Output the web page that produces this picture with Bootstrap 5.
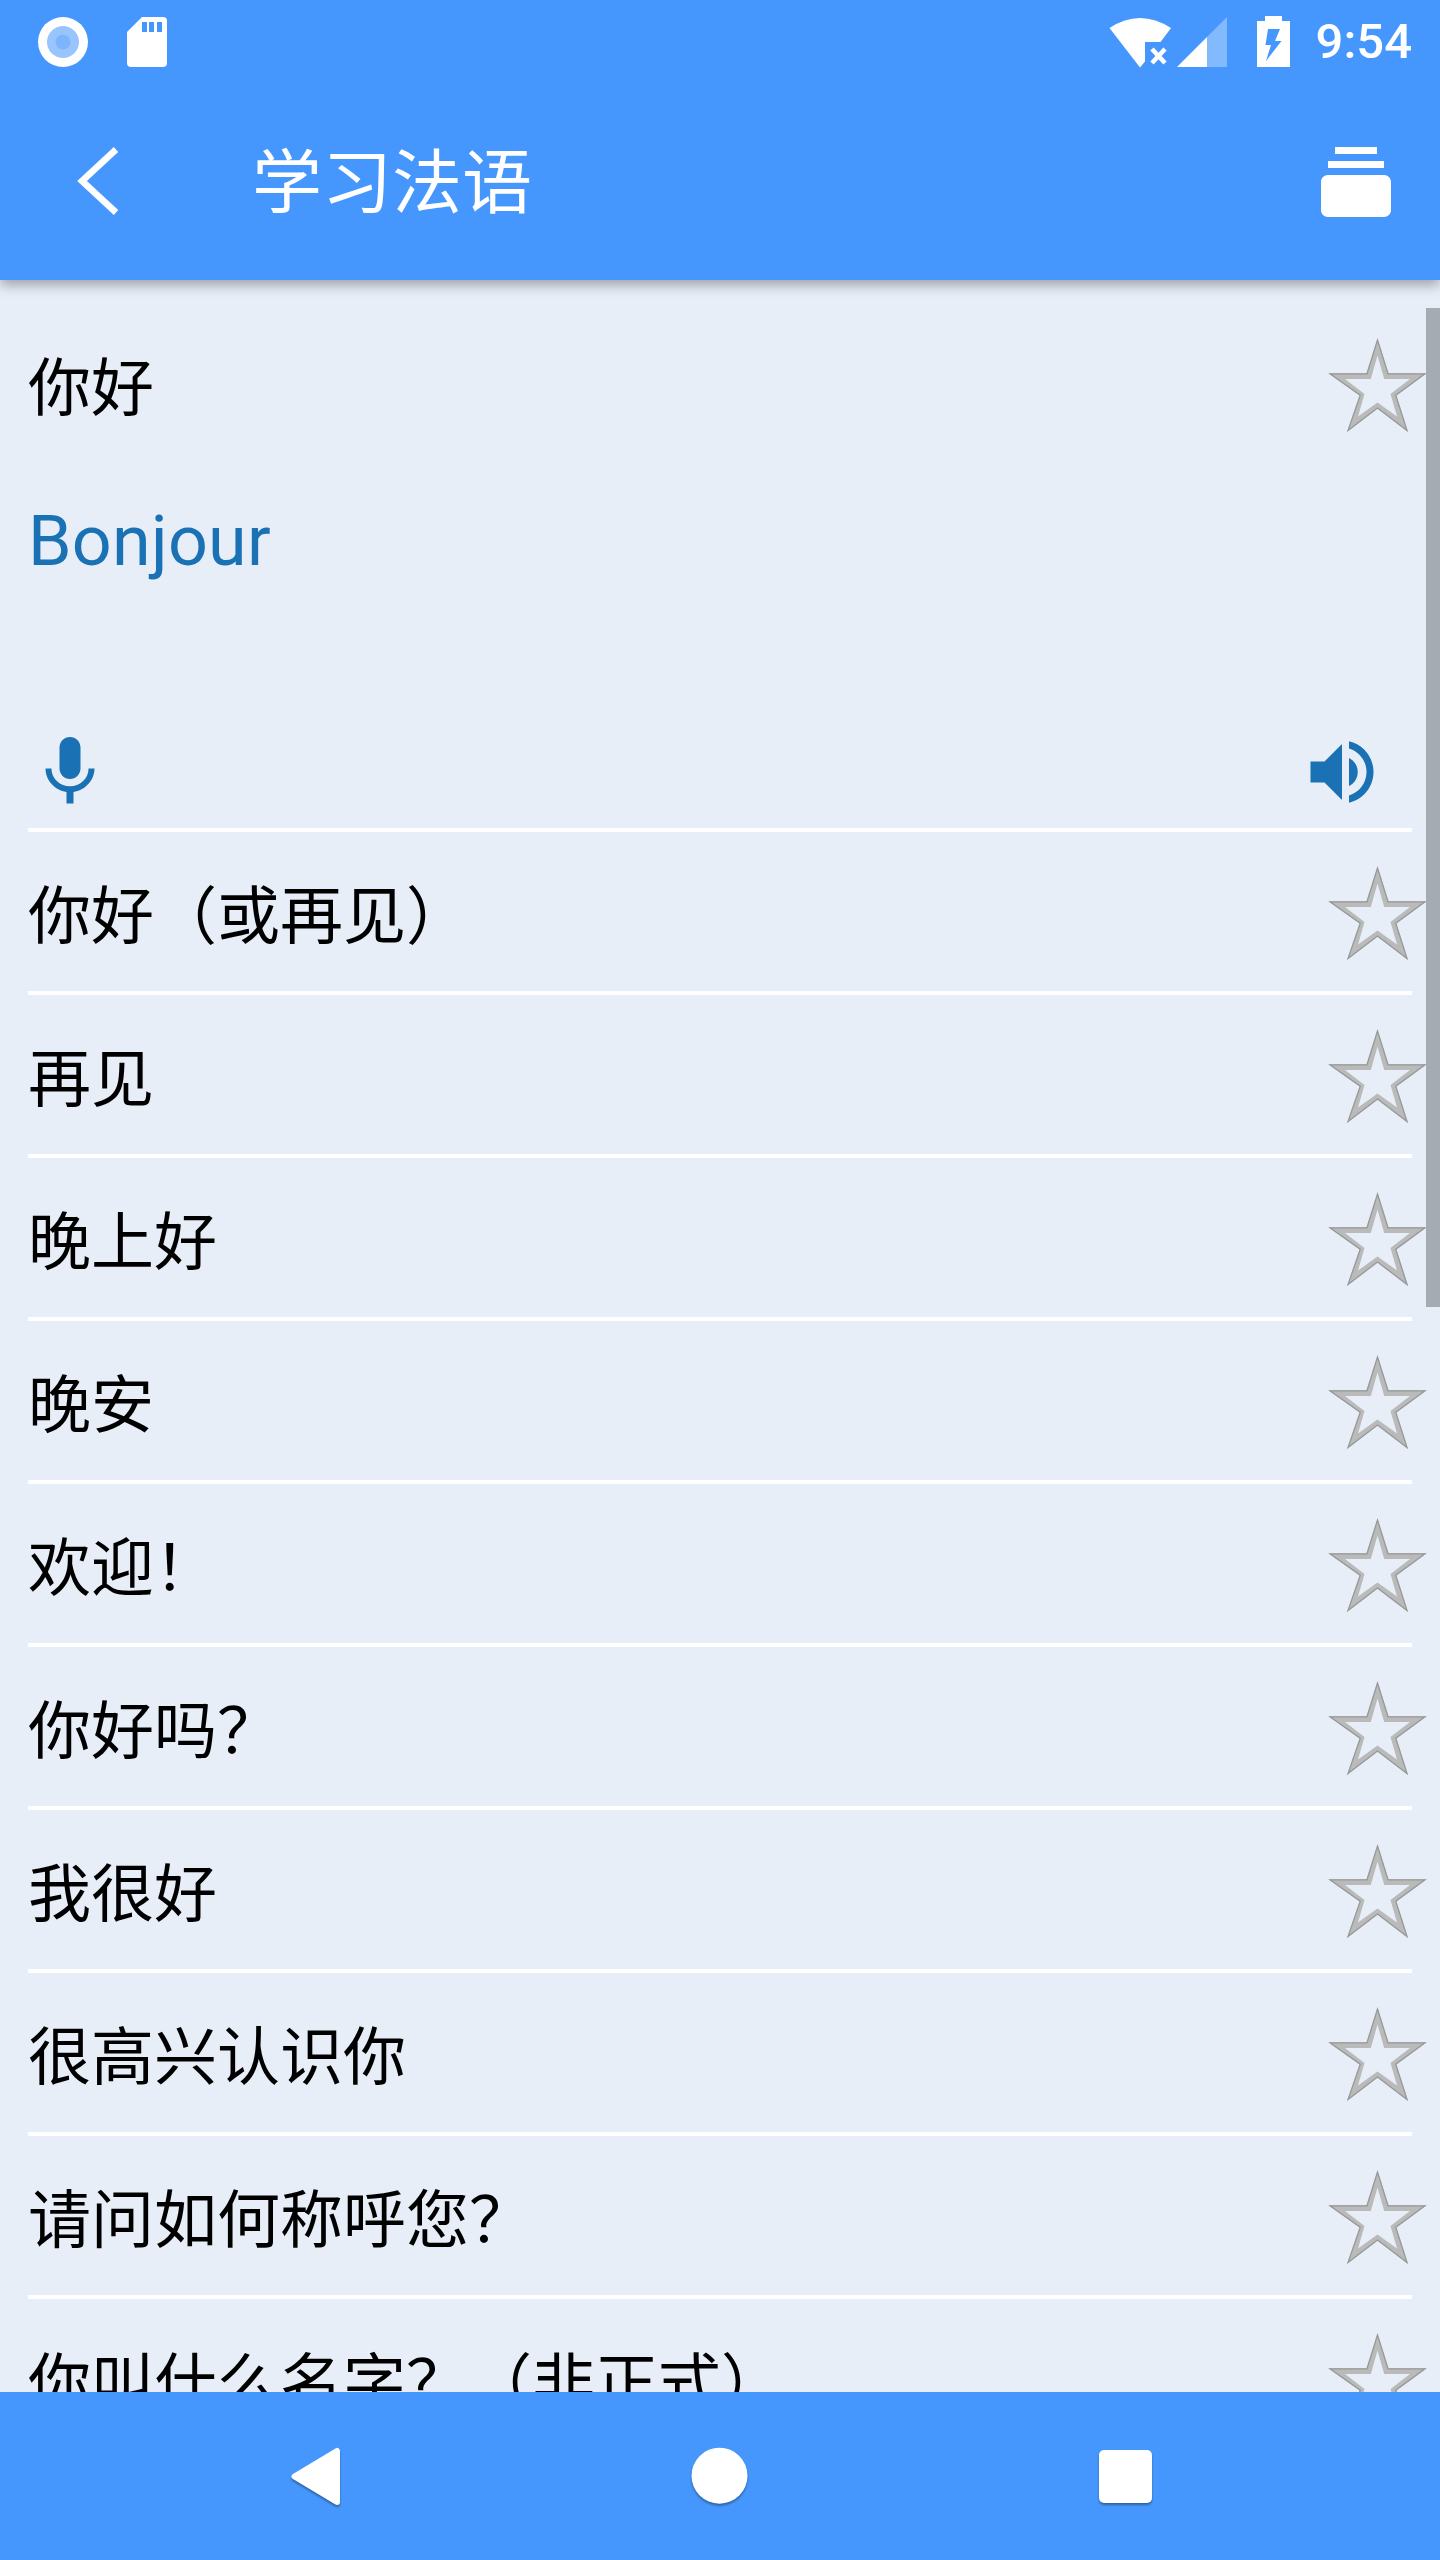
<!DOCTYPE html>
<html lang="zh-CN">
<head>
<meta charset="utf-8">
<meta name="viewport" content="width=device-width, initial-scale=1">
<title>学习法语</title>
<link href="https://cdn.jsdelivr.net/npm/bootstrap@5.3.0/dist/css/bootstrap.min.css" rel="stylesheet">
<style>
body{background:#e7eef8;font-family:Roboto,"Noto Sans CJK SC",sans-serif;color:#000}
.screen{width:1440px;height:2560px}
.app-top{background:#4697fd;height:280px;box-shadow:0 5px 12px rgba(0,0,0,.32);z-index:2}
.status{height:84px;padding:0 28px 0 36px}
.clock{font-size:49px;line-height:84px;font-weight:500}
.toolbar{height:196px;padding:56px 42px 0 70px}
.title-text{font-size:70px;font-weight:400;line-height:84px;margin:-4px 0 0 126px;font-family:"Noto Sans CJK SC",sans-serif}
.phrases{padding-top:24px}
.phrase-row{height:159px;padding:33px 13px 0 28px}
.phrase-text{font-size:63px;line-height:92px;font-family:"Noto Sans CJK SC",sans-serif}
.rule{height:4px;margin:0 28px;background:#fff}
.translation{height:365px;padding:34px 56px 14px 28px;color:#1a72b4}
.french{font-size:70px;line-height:88px;letter-spacing:.25px}
.thumb{width:14px;height:999px;top:28px;right:0;background:#a5abb3}
.nav-keys{background:#4697fd;height:168px;z-index:2}
svg{display:block;flex:none}
.key-shadow{filter:drop-shadow(0 2px 1px rgba(0,0,0,.35))}
</style>
</head>
<body>
<svg width="0" height="0" class="position-absolute">
<defs><symbol id="star" viewBox="0 0 100 96">
<path fill="#b9bab9" fill-rule="evenodd" d="M50.500 1.500 61.500 36.200H99.500L69.500 58.500 81 94.500 50.500 71.500 20.300 94.500 32.500 58.500 1.500 36.200H39.500ZM50.500 18.500 43.800 42H18L37.500 57 31 79.500 50.500 65.500 70 79.500 63.500 57 83 42H57.200Z"/>
<path fill="none" stroke="#969999" stroke-width="1.200" d="M50.500 3 61 36.800H98L68.700 58.300 80 93.500 50.500 71 21 93.500 33.300 58.300 3 36.800H40Z"/>
</symbol></defs></svg>
<div class="screen d-flex flex-column overflow-hidden">
<header class="app-top position-relative flex-shrink-0 text-white">
<div class="status d-flex justify-content-between align-items-center">
<svg width="140" height="84"><circle cx="27" cy="42" r="25" fill="#fff"/><circle cx="27" cy="42" r="16" fill="#98c5fd"/><circle cx="27" cy="42" r="7.500" fill="#7db4fc"/>
<path fill="#fff" d="M106 17h21q4 0 4 4v42q0 4-4 4H95q-4 0-4-4V32Z"/><path fill="#4697fd" d="M106 22h5v10h-5zm7 0h5v10h-5zm8 0h5v10h-5z"/></svg>
<div class="d-flex align-items-center">
<svg width="209" height="84" viewBox="1107 0 209 84"><path fill="#fff" d="M1109.500 28Q1140 8 1171 28L1160.500 42H1145V61.500L1140 67.500Z"/><path stroke="#fff" stroke-width="4.500" d="m1152 49 13 14m0-14-13 14"/>
<path fill="#83b9fd" d="M1227 17V67H1207V37Z"/><path fill="#fff" d="M1177 67 1207 37V67Z"/>
<path fill="#fff" fill-rule="evenodd" d="M1265 16h17v5h8v46h-33V21h8ZM1268 29 1265.500 45H1271L1266 61 1281.500 41H1275L1280 29Z"/></svg>
<div class="clock">9:54</div></div>
</div>
<div class="toolbar d-flex align-items-start">
<svg width="56" height="84" viewBox="70 140 56 84"><path fill="none" stroke="#fff" stroke-width="6.500" d="M116 149.500 82 181 116 212.500"/></svg>
<div class="title-text me-auto">学习法语</div>
<svg width="84" height="84" viewBox="0 0 24 24"><path fill="#fff" d="M20 8H4V6h16v2zm-2-6H6v2h12V2zm4 10v8c0 1.100-.9 2-2 2H4c-1.100 0-2-.9-2-2v-8c0-1.100.9-2 2-2h16c1.100 0 2 .9 2 2z"/></svg>
</div>
</header>
<main class="phrases position-relative flex-grow-1 overflow-hidden" id="phrases">
<div class="thumb position-absolute"></div>
<div class="phrase-row d-flex justify-content-between"><div class="phrase-text">你好</div><svg width="100" height="96"><use href="#star"/></svg></div>
<div class="translation d-flex flex-column justify-content-between">
<div class="french">Bonjour</div>
<div class="d-flex justify-content-between">
<svg width="84" height="84" viewBox="0 0 24 24" fill="#1a72b4"><path d="M12 14c1.660 0 3-1.340 3-3V5c0-1.660-1.340-3-3-3S9 3.340 9 5v6c0 1.660 1.340 3 3 3zm5.300-3c0 3-2.540 5.100-5.300 5.100S6.700 14 6.700 11H5c0 3.410 2.720 6.230 6 6.720V21h2v-3.280c3.280-.48 6-3.300 6-6.720h-1.700z"/></svg>
<svg width="84" height="84" viewBox="0 0 24 24" fill="#1a72b4"><path d="M3 9v6h4l5 5V4L7 9H3zm13.500 3c0-1.770-1.020-3.290-2.500-4.030v8.050c1.480-.73 2.500-2.250 2.500-4.020zM14 3.230v2.060c2.890.86 5 3.540 5 6.710s-2.110 5.850-5 6.710v2.060c4.010-.91 7-4.490 7-8.770s-2.990-7.860-7-8.770z"/></svg>
</div></div>
<div class="rule"></div>
<div class="phrase-row d-flex justify-content-between"><div class="phrase-text">你好（或再见）</div><svg width="100" height="96"><use href="#star"/></svg></div><div class="rule"></div>
<div class="phrase-row d-flex justify-content-between"><div class="phrase-text">再见</div><svg width="100" height="96"><use href="#star"/></svg></div><div class="rule"></div>
<div class="phrase-row d-flex justify-content-between"><div class="phrase-text">晚上好</div><svg width="100" height="96"><use href="#star"/></svg></div><div class="rule"></div>
<div class="phrase-row d-flex justify-content-between"><div class="phrase-text">晚安</div><svg width="100" height="96"><use href="#star"/></svg></div><div class="rule"></div>
<div class="phrase-row d-flex justify-content-between"><div class="phrase-text">欢迎！</div><svg width="100" height="96"><use href="#star"/></svg></div><div class="rule"></div>
<div class="phrase-row d-flex justify-content-between"><div class="phrase-text">你好吗？</div><svg width="100" height="96"><use href="#star"/></svg></div><div class="rule"></div>
<div class="phrase-row d-flex justify-content-between"><div class="phrase-text">我很好</div><svg width="100" height="96"><use href="#star"/></svg></div><div class="rule"></div>
<div class="phrase-row d-flex justify-content-between"><div class="phrase-text">很高兴认识你</div><svg width="100" height="96"><use href="#star"/></svg></div><div class="rule"></div>
<div class="phrase-row d-flex justify-content-between"><div class="phrase-text">请问如何称呼您？</div><svg width="100" height="96"><use href="#star"/></svg></div><div class="rule"></div>
<div class="phrase-row d-flex justify-content-between"><div class="phrase-text">你叫什么名字？（非正式）</div><svg width="100" height="96"><use href="#star"/></svg></div>
</main>
<nav class="nav-keys flex-shrink-0">
<svg width="1440" height="168" viewBox="0 2392 1440 168"><g class="key-shadow" fill="#fff" stroke="#fff" stroke-linejoin="round"><path stroke-width="6" d="M294.500 2476.500 337 2451V2502Z"/><circle cx="719.500" cy="2475.700" r="28" stroke="none"/><rect x="1099" y="2450" width="53" height="53" rx="5" stroke="none"/></g></svg>
</nav>
</div>
<script src="https://cdn.jsdelivr.net/npm/bootstrap@5.3.0/dist/js/bootstrap.bundle.min.js"></script>
</body>
</html>
